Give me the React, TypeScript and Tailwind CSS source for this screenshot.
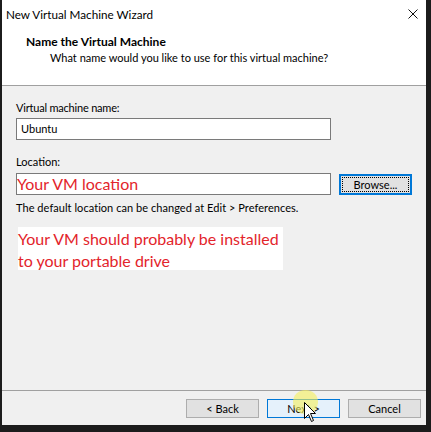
import React from "react";

const ui = { fontFamily: 'Lato, "Noto Sans", sans-serif' };

export default function App() {
  return (
    <div className="w-[431px] h-[432px] bg-[#1c1c1c] relative overflow-hidden" style={ui}>
      <div className="ml-[2px] w-[424px] h-[425px] bg-[#f0f0f0] flex flex-col text-[11px] text-black">
        {/* title bar */}
        <div className="h-[28px] bg-white flex items-center justify-between pl-[4px] pr-[6px]">
          <span className="text-[11.7px] leading-[16px]">New Virtual Machine Wizard</span>
          <svg width="10" height="10" viewBox="0 0 10 10" className="mr-[2px]">
            <path d="M0.5 0.5 L9.5 9.5 M9.5 0.5 L0.5 9.5" stroke="#111" strokeWidth="1" fill="none" />
          </svg>
        </div>
        {/* header */}
        <div className="h-[51px] bg-white pt-[6px] border-b border-[#a0a0a0] box-content">
          <div className="pl-[24px] font-bold text-[12px] leading-[16px]">Name the Virtual Machine</div>
          <div className="pl-[48px] leading-[16px]">What name would you like to use for this virtual machine?</div>
        </div>
        {/* body */}
        <div className="flex-1 flex flex-col pl-[14px] pt-[14px]">
          <div className="leading-[16px] tracking-[-0.2px]">Virtual machine name:</div>
          <div className="mt-[2px] w-[315px] h-[22px] bg-white border border-[#7a7a7a] flex items-center pl-[4px] leading-[16px]">
            Ubuntu
          </div>
          <div className="mt-[14px] leading-[16px]">Location:</div>
          <div className="mt-[3px] flex items-start gap-[8px]">
            <div className="w-[315px] h-[22px] bg-white border border-[#7a7a7a] flex items-center overflow-hidden">
              <span className="text-[#e3242b] text-[16px] leading-[20px] bg-white">Your VM location</span>
            </div>
            <div className="mt-[1px] w-[73px] h-[21px] bg-[#e1e1e1] border-2 border-[#0078d7] flex items-center justify-center">
              <div className="w-[67px] h-[15px] border border-dotted border-black flex items-center justify-center leading-[14px]">
                Browse...
              </div>
            </div>
          </div>
          <div className="mt-[5px] leading-[16px] tracking-[0.05px]">The default location can be changed at Edit &gt; Preferences.</div>
          <div className="mt-[11px] ml-[2px] w-[265px] h-[43px] bg-white pt-[1px]">
            <div className="text-[#e3242b] text-[16px] leading-[21.5px] whitespace-nowrap">
              Your VM should probably be installed
              <br />
              to your portable drive
            </div>
          </div>
        </div>
        {/* footer */}
        <div className="border-t border-[#a0a0a0] h-[35px] flex justify-end items-start gap-[8px] pr-[5px] pt-[8px]">
          <div className="w-[73px] h-[19px] bg-[#e1e1e1] border border-[#adadad] flex items-center justify-center leading-[14px]">&lt; Back</div>
          <div className="w-[73px] h-[19px] bg-[#e5f1fb] border border-[#0078d7] flex items-center justify-center leading-[14px]">Next &gt;</div>
          <div className="w-[73px] h-[19px] bg-[#e1e1e1] border border-[#adadad] flex items-center justify-center leading-[14px]">Cancel</div>
        </div>
      </div>
      {/* cursor highlight */}
      <div className="absolute left-[293px] top-[390px] w-[25px] h-[24px] rounded-full bg-[#f5f05a] opacity-60" />
      <svg className="absolute left-[304px] top-[402px]" width="14" height="22" viewBox="0 0 14 22">
        <path d="M0.5 0.5 L0.5 16.5 L4.5 12.5 L7.5 19.5 L9.5 18.5 L6.5 11.5 L11.5 11.5 Z" fill="white" stroke="black" strokeWidth="1" strokeLinejoin="miter" />
      </svg>
    </div>
  );
}
